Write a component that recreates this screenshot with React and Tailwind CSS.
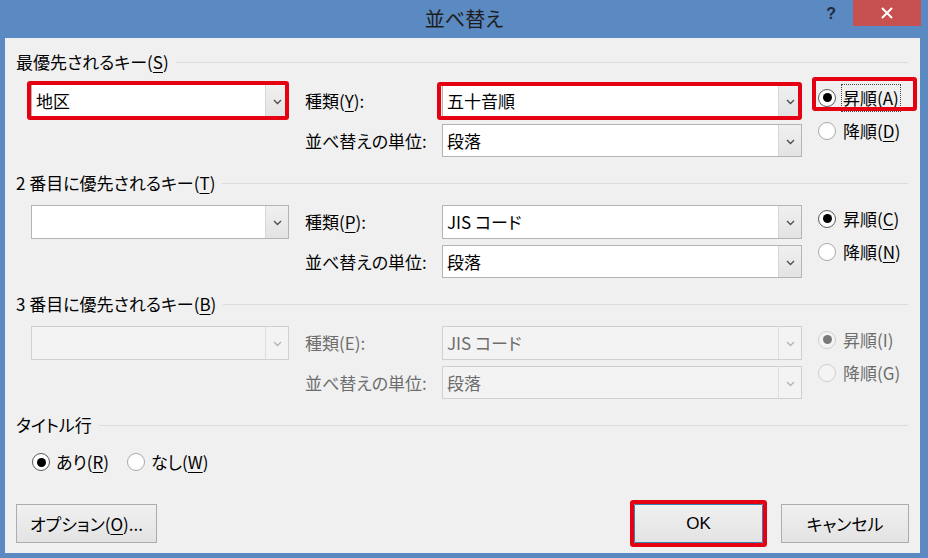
import React from 'react';

const U = ({ children }) => <span className="underline underline-offset-[3px]">{children}</span>;

function Chevron({ disabled }) {
  return (
    <svg width="9" height="6" viewBox="0 0 9 6">
      <path d="M1 1 L4.5 4.5 L8 1" fill="none" stroke={disabled ? '#b5b5b5' : '#505050'} strokeWidth="1.4" />
    </svg>
  );
}

function Combo({ value, className, disabled, hl }) {
  return (
    <div className={`relative flex border ${disabled ? 'border-[#d0d0d0] bg-[#f3f3f3] text-[#6d6d6d]' : 'border-[#b4b4b4] bg-white text-black'} ${className}`}>
      <div className="flex flex-1 items-center pl-[4px] whitespace-nowrap">{value}</div>
      <div className={`flex w-[23px] items-center justify-center border-l pt-[2px] ${disabled ? 'border-[#dedede] bg-[#f3f3f3]' : 'border-[#d6d6d6] bg-gradient-to-b from-[#f0f0f0] to-[#e3e3e3]'}`}>
        <Chevron disabled={disabled} />
      </div>
      {hl && <div className={`pointer-events-none absolute rounded-[3px] border-[4px] border-[#e50012] ${hl}`} />}
    </div>
  );
}

function Radio({ checked, disabled, children, focus, hl }) {
  return (
    <div className="relative flex h-[33px] items-center whitespace-nowrap">
      <span className={`flex h-[18px] w-[18px] items-center justify-center rounded-full border ${disabled ? 'border-[#cfcfcf] bg-[#f4f4f4]' : checked ? 'border-[#5a5a5a] bg-white' : 'border-[#a9a9a9] bg-white'}`}>
        {checked && <span className={`h-[9px] w-[9px] rounded-full ${disabled ? 'bg-[#7a7a7a]' : 'bg-black'}`} />}
      </span>
      <span className={`ml-[6px] px-[1px] leading-[26px] ${focus ? 'outline outline-1 outline-dotted outline-[#444]' : ''} ${disabled ? 'text-[#6d6d6d]' : ''}`}>{children}</span>
      {hl && <div className={`pointer-events-none absolute rounded-[3px] border-[4px] border-[#e50012] ${hl}`} />}
    </div>
  );
}

function Header({ children }) {
  return (
    <div className="flex h-[24px] items-center pr-[12px]">
      <span className="whitespace-nowrap leading-[24px]">{children}</span>
      <div className="ml-[7px] h-0 flex-1 border-t border-[#dcdcdc]" />
    </div>
  );
}

function SortSection({ title, keyValue, typeLabel, typeValue, asc, desc, disabled, first }) {
  const lbl = disabled ? 'text-[#6d6d6d]' : '';
  return (
    <div className="mb-[14px]">
      <Header>{title}</Header>
      <div className="mt-[10px] flex pl-[15px]">
        <div className="grid grid-cols-[258px_121px_360px] gap-x-4 gap-y-[6px]">
          <Combo value={keyValue} disabled={disabled} className="h-[34px]" hl={first ? '-left-[5px] -right-[1px] -top-[4px] -bottom-[3px]' : ''} />
          <div className={`flex items-center ${lbl}`}>{typeLabel}</div>
          <Combo value={typeValue} disabled={disabled} className="h-[34px]" hl={first ? '-left-[6px] -right-[1px] -top-[3px] -bottom-[3px]' : ''} />
          <div />
          <div className={`flex items-center whitespace-nowrap ${lbl}`}>並べ替えの単位:</div>
          <Combo value="段落" disabled={disabled} className="h-[33px]" />
        </div>
        <div className="-mt-[3px] ml-[16px] flex flex-col">
          <Radio checked disabled={disabled} focus={first} hl={first ? '-left-[6px] w-[105px] -top-[4px] bottom-[3px]' : ''}>{asc}</Radio>
          <Radio disabled={disabled}>{desc}</Radio>
        </div>
      </div>
    </div>
  );
}

export default function App() {
  return (
    <div className="flex h-[558px] w-[928px] flex-col bg-[#5b89c1] font-['Noto_Sans_CJK_JP','Noto_Sans',sans-serif] text-[17px] text-black [font-feature-settings:'palt']">
      <div className="grid h-[38px] grid-cols-[1fr_auto_1fr]">
        <div />
        <div className="flex items-center text-[20px] text-[#1d1d1d]">並べ替え</div>
        <div className="flex items-start justify-end">
          <span className="mr-[17px] mt-[2px] text-[16px] font-bold text-[#1f2a3d] [font-family:'Liberation_Sans',sans-serif]">?</span>
          <div className="mr-[7px] flex h-[26px] w-[68px] items-center justify-center bg-[#c75050]">
            <svg width="12" height="12" viewBox="0 0 12 12">
              <path d="M1 1 L11 11 M11 1 L1 11" stroke="#fff" strokeWidth="2" />
            </svg>
          </div>
        </div>
      </div>
      <div className="mb-[5px] ml-[5px] mr-[8px] flex flex-1 flex-col bg-[#f0f0f0] pl-[11px] pt-[12px]">
        <SortSection
          first
          title={<>最優先されるキー(<U>S</U>)</>}
          keyValue="地区"
          typeLabel={<span>種類(<U>Y</U>):</span>}
          typeValue="五十音順"
          asc={<>昇順(<U>A</U>)</>}
          desc={<>降順(<U>D</U>)</>}
        />
        <SortSection
          title={<>2 番目に優先されるキー(<U>T</U>)</>}
          keyValue=""
          typeLabel={<span>種類(<U>P</U>):</span>}
          typeValue="JIS コード"
          asc={<>昇順(<U>C</U>)</>}
          desc={<>降順(<U>N</U>)</>}
        />
        <SortSection
          disabled
          title={<>3 番目に優先されるキー(<U>B</U>)</>}
          keyValue=""
          typeLabel={<span>種類(E):</span>}
          typeValue="JIS コード"
          asc={<>昇順(I)</>}
          desc={<>降順(G)</>}
        />
        <Header>タイトル行</Header>
        <div className="mt-[13px] flex h-[24px] items-center pl-[16px]">
          <div className="flex items-center">
            <span className="flex h-[18px] w-[18px] items-center justify-center rounded-full border border-[#5a5a5a] bg-white">
              <span className="h-[9px] w-[9px] rounded-full bg-black" />
            </span>
            <span className="ml-[6px]">あり(<U>R</U>)</span>
          </div>
          <div className="ml-[18px] flex items-center">
            <span className="h-[18px] w-[18px] rounded-full border border-[#a9a9a9] bg-white" />
            <span className="ml-[6px]">なし(<U>W</U>)</span>
          </div>
        </div>
        <div className="mt-[30px] flex items-start pr-[11px]">
          <button className="h-[39px] w-[141px] border border-[#adadad] bg-gradient-to-b from-[#f0f0f0] to-[#e3e3e3]">
            オプション(<U>O</U>)...
          </button>
          <div className="flex-1" />
          <button className="h-[39px] w-[129px] rounded-[1px] border border-[#3c7fb1] bg-gradient-to-b from-[#f0f0f0] to-[#e3e3e3] ring-[4px] ring-[#e50012] [font-family:'Liberation_Sans',sans-serif]">
            OK
          </button>
          <button className="ml-[18px] h-[39px] w-[128px] border border-[#adadad] bg-gradient-to-b from-[#f0f0f0] to-[#e3e3e3]">
            キャンセル
          </button>
        </div>
      </div>
    </div>
  );
}
